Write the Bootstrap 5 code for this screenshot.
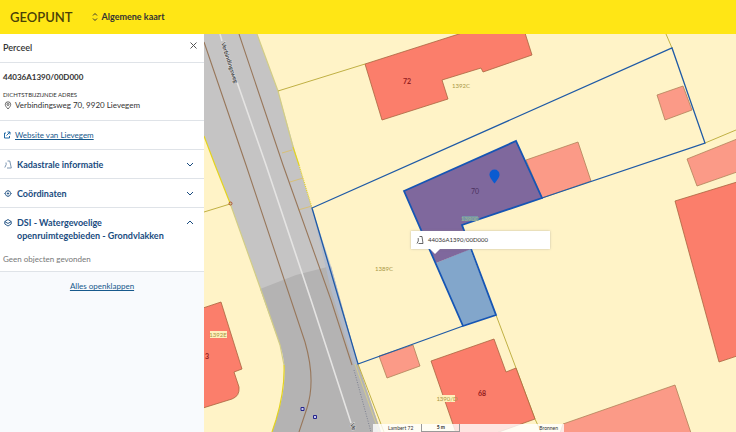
<!DOCTYPE html>
<html lang="nl">
<head>
<meta charset="utf-8">
<meta name="viewport" content="width=device-width, initial-scale=1">
<title>Geopunt - Algemene kaart</title>
<link href="https://cdn.jsdelivr.net/npm/bootstrap@5.3.0/dist/css/bootstrap.min.css" rel="stylesheet">
<style>
body{font-family:Lato,"Open Sans",sans-serif;font-size:8px;line-height:12px;color:#333;background:#fff}
.topbar{background:#ffe615;height:34px;padding-left:10px;gap:20px}
.brand{font-size:13px;line-height:20px;font-weight:600;color:#4a4108;text-decoration:none}
.switcher{font-size:9px;line-height:12px;font-weight:700;color:#3a330c;gap:3px}
.panel{width:204px;background:#f8fafd;z-index:1}
.sect{background:#fff;border-bottom:1px solid #dfe3e8;padding:0 3px}
.head{height:29px}
.head h1{font-size:9px;line-height:12px;font-weight:600}
.title-id{font-weight:700}
.caps{font-size:6px;line-height:8px}
.addr{padding-left:1px;gap:3px;font-size:8px;line-height:13px}
.plain{background:none;border:0;padding:0;color:inherit;text-align:left}
.row-link{height:29px;color:#0a5a9c}
.row-link a,.more a{color:#17598c}
.row-link a{font-size:8px}
.acc{font-size:9px;font-weight:700;color:#1a4c80;padding:8px 7px 7px 1px;line-height:13px;gap:5px}
.muted-note{color:#777;padding-bottom:6px}
.tip{left:207px;top:197px;width:139px;height:18px;background:#fff;box-shadow:0 0 2px #8888;font-size:6px;line-height:10px;padding-left:5px;gap:4px}
.tip::after{content:"";position:absolute;left:19px;top:18px;border:5px solid transparent;border-top-color:#fff;border-bottom:0}
.foot{left:169px;bottom:0;width:191px;height:8px;background:#fffc;font-size:5px;line-height:8px;padding:0 6px 0 15px}
.scale{width:39px;border:1px solid #999;border-top:0;line-height:7px}
svg{flex:none}
</style>
<script src="https://cdn.jsdelivr.net/npm/bootstrap@5.3.0/dist/js/bootstrap.bundle.min.js"></script>
</head>
<body class="vh-100 d-flex flex-column overflow-hidden">
<header class="topbar d-flex align-items-center flex-shrink-0">
  <a class="brand" href="#">GEOPUNT</a>
  <button class="plain switcher d-flex align-items-center" type="button"><svg width="6" height="10" fill="none" stroke="currentColor"><path d="M1 3.500 3 1.500 5 3.500M1 6.500 3 8.500 5 6.500"/></svg>Algemene kaart</button>
</header>
<div class="d-flex flex-fill overflow-hidden">
  <aside class="panel flex-shrink-0 overflow-auto">
    <div class="sect head d-flex justify-content-between align-items-center">
      <h1 class="m-0">Perceel</h1>
      <button class="plain d-flex align-self-start mt-2 me-1" type="button" aria-label="Sluiten"><svg width="7" height="7" stroke="#555"><path d="M.5.5 6.500 6.500M6.500.5.5 6.500"/></svg></button>
    </div>
    <div class="sect pt-2 pb-2">
      <div class="title-id mb-2">44036A1390/00D000</div>
      <div class="caps">DICHTSTBIJZIJNDE ADRES</div>
      <div class="addr d-flex align-items-center"><svg width="8" height="9" fill="none" stroke="#444" stroke-width=".8"><path d="M4 8C2.300 6 1.300 5 1.300 3.500a2.700 2.700 0 0 1 5.400 0C6.700 5 5.700 6 4 8z"/><circle cx="4" cy="3.500" r="1"/></svg>Verbindingsweg 70, 9920 Lievegem</div>
    </div>
    <div class="sect row-link d-flex align-items-center gap-1"><svg width="8" height="8" fill="none" stroke="currentColor" stroke-width=".9"><path d="M3 2H1.500v5h5V5M4.500 1H7v2.500M7 1 3.500 4.500"/></svg><a href="#">Website van Lievegem</a></div>
    <div class="sect"><button class="plain acc d-flex w-100" type="button" aria-expanded="false"><svg width="8" height="13" fill="none" stroke="#6d8aa8" stroke-width=".9"><path d="M.8 9.500 2.200 6.500 2 4.500M3.500 3H5.800L7.300 10H3"/></svg><span class="flex-fill">Kadastrale informatie</span><svg width="8" height="13" fill="none" stroke="currentColor"><path d="M1 5 4 8 7 5"/></svg></button></div>
    <div class="sect"><button class="plain acc d-flex w-100" type="button" aria-expanded="false"><svg width="8" height="13" fill="none" stroke="currentColor" stroke-width=".8"><circle cx="4" cy="6.500" r="2.700"/><circle cx="4" cy="6.500" r=".7" fill="currentColor"/><path d="M4 3v1M4 9v1M.3 6.500h1M6.700 6.500h1"/></svg><span class="flex-fill">Coördinaten</span><svg width="8" height="13" fill="none" stroke="currentColor"><path d="M1 5 4 8 7 5"/></svg></button></div>
    <div class="sect"><button class="plain acc d-flex w-100" type="button" aria-expanded="true"><svg width="8" height="13" fill="none" stroke="currentColor" stroke-width=".9"><path d="M4 3.500.8 5.500 4 7.500 7.200 5.500zM.8 5.500v2.500L4 10 7.200 8V5.500"/></svg><span class="flex-fill">DSI - Watergevoelige<br>openruimtegebieden - Grondvlakken</span><svg width="8" height="13" fill="none" stroke="currentColor"><path d="M1 8 4 5 7 8"/></svg></button>
      <div class="muted-note pt-1">Geen objecten gevonden</div></div>
    <div class="more text-center pt-2"><a href="#">Alles openklappen</a></div>
  </aside>
  <main class="flex-fill position-relative overflow-hidden">
    <svg class="d-block w-100 h-100" viewBox="204 34 532 398" preserveAspectRatio="xMinYMin slice" role="img" aria-label="Perceelkaart" font-family="Lato, sans-serif">
      <path fill="#fff3c7" d="M204 34h532v398H204z"/>
      <path fill="#c5c4c4" d="M204 34H257L278 91 299 165 312 208 358 364 381 432H272L276 420Q291 375 280 345L261 290 230 203 215 165 204 136z"/>
      <path fill="#b4b3b3" d="M260 289 296 275 331 266 358 364 381 432H272L276 420Q291 375 280 345z"/>
      <path fill="#b0bcd0" d="M312 208 331 266 358 364 354 365 331 290z" opacity=".8"/>
      <g fill="none" stroke="#e3d31f" stroke-width="1.200">
        <path d="M204 136 215 165 230 203M293 147 299 165M284 365Q285 390 276 420L272 432"/>
        <path stroke="#d2cd86" d="M230 203 261 290 280 345 284 365M257 34 278 91 293 147"/>
        <path stroke-dasharray="1 1" d="M299 165 312 208"/>
        <path stroke="#d8c077" stroke-width="1" d="M282 153 292 150M290 182 303 178M298 210 312 206"/>
      </g>
      <g fill="none" stroke="#98775b" stroke-width="1.100">
        <path d="M204 42 246 165 291 300 305 342Q316 380 307 408L299 432M239 34 283 165 331 300 352 365"/>
        <path stroke="#e5e4e3" stroke-width="1.600" d="M220 34 222 41M237 82 266 165 311 300 351 423"/>
      </g>
      <g fill="none" stroke="#c0b044">
        <path d="M278 91 365 64M204 212 230 204M666 34 672 48M705 143 736 130M496 315 516 368 535 419 541 432M358 364 384 432"/>
        <path stroke="#d4cc8c" d="M355 364 379 432"/>
        <path stroke="#7d8190" stroke-dasharray="1 1.500" d="M354 370 371 432"/>
      </g>
      <g fill="#fb7e6b" stroke="#a8643f" stroke-width=".8">
        <path d="M365 64 462 33H525L532 55 483 72 481 68 442 80 448 99 382 120z"/>
        <path d="M737 182 675 201 719 362 737 356z"/>
        <path d="M431 361 494 339 506 372 516 368 535 419 496 433H456z"/>
        <path d="M203 308 221 302 242 369 234 372 239 387Q240 396 232 399L203 408z"/>
      </g>
      <g fill="#fb9a87" stroke="#b08258" stroke-width=".8">
        <path d="M657 95 683 86 692 110 665 120z"/>
        <path d="M526 160 578 142 591 181 542 198z"/>
        <path d="M737 139 687 159 697 186 737 172z"/>
        <path d="M675 385 563 424 560 433H691z"/>
        <path d="M379 356 413 345 420 366 387 378z"/>
      </g>
      <path fill="none" stroke="#1f5aa6" stroke-width="1.300" d="M542 198 705 143 672 48 312 208 358 364 463 326"/>
      <path fill="#82a6cb" d="M436 263 470 249 496 315 463 326z"/>
      <path fill="#7f689d" d="M404 191 516 141 542 198 462 225 471 249 436 263z"/>
      <path fill="none" stroke="#1655b4" stroke-width="1.800" d="M404 191 516 141 542 198 462 225 496 315 463 326z"/>
      <path fill="#0b5bd0" d="M494.500 183.500C491 179 489.500 177 489.500 174.500a5 5 0 0 1 10 0C499.500 177 498 179 494.500 183.500z"/>
      <circle cx="230.500" cy="203.500" r="1.500" fill="none" stroke="#b0512a"/>
      <g fill="#c9c9ee" stroke="#25258d"><path d="M301 407.500h3v3h-3zM313.500 415.500h3v3h-3z"/></g>
      <g font-size="7" font-weight="700" fill="#942020" text-anchor="middle">
        <text x="407" y="84">72</text><text x="482" y="396">68</text><text x="207" y="359">3</text>
        <text x="475" y="194" font-weight="400" fill="#4b315e">70</text>
      </g>
      <path fill="#fff0bc" d="M210 331h17v7h-17zM438 395h17v7h-17z"/>
      <path fill="#7793a9" d="M462 216h16v5h-16z"/>
      <g font-size="6" fill="#a89745" text-anchor="middle">
        <text x="461" y="88">1392C</text><text x="384" y="271">1389C</text><text x="218" y="337">1392E</text><text x="447" y="401">1390/D</text><text x="470" y="221" fill="#9bb58f">1390D</text>
      </g>
      <g font-size="6" font-weight="700" fill="#444" stroke="#ddd" stroke-width="1" paint-order="stroke">
        <text transform="translate(221 43) rotate(72)">Verbindingsweg</text>
        <text transform="translate(350 424) rotate(72)">Ve</text>
      </g>
    </svg>
    <div class="tip position-absolute d-flex align-items-center"><svg width="8" height="10" fill="none" stroke="#444" stroke-width=".8"><path d="M1 8.500 2.300 6 2.200 3M3.500 1.500H6L7 8.500H2.500"/></svg>44036A1390/00D000</div>
    <div class="foot position-absolute d-flex justify-content-between"><span class="d-flex gap-2"><span>Lambert 72</span><span class="scale text-center fw-bold">5 m</span></span><span>Bronnen</span></div>
  </main>
</div>
</body>
</html>
